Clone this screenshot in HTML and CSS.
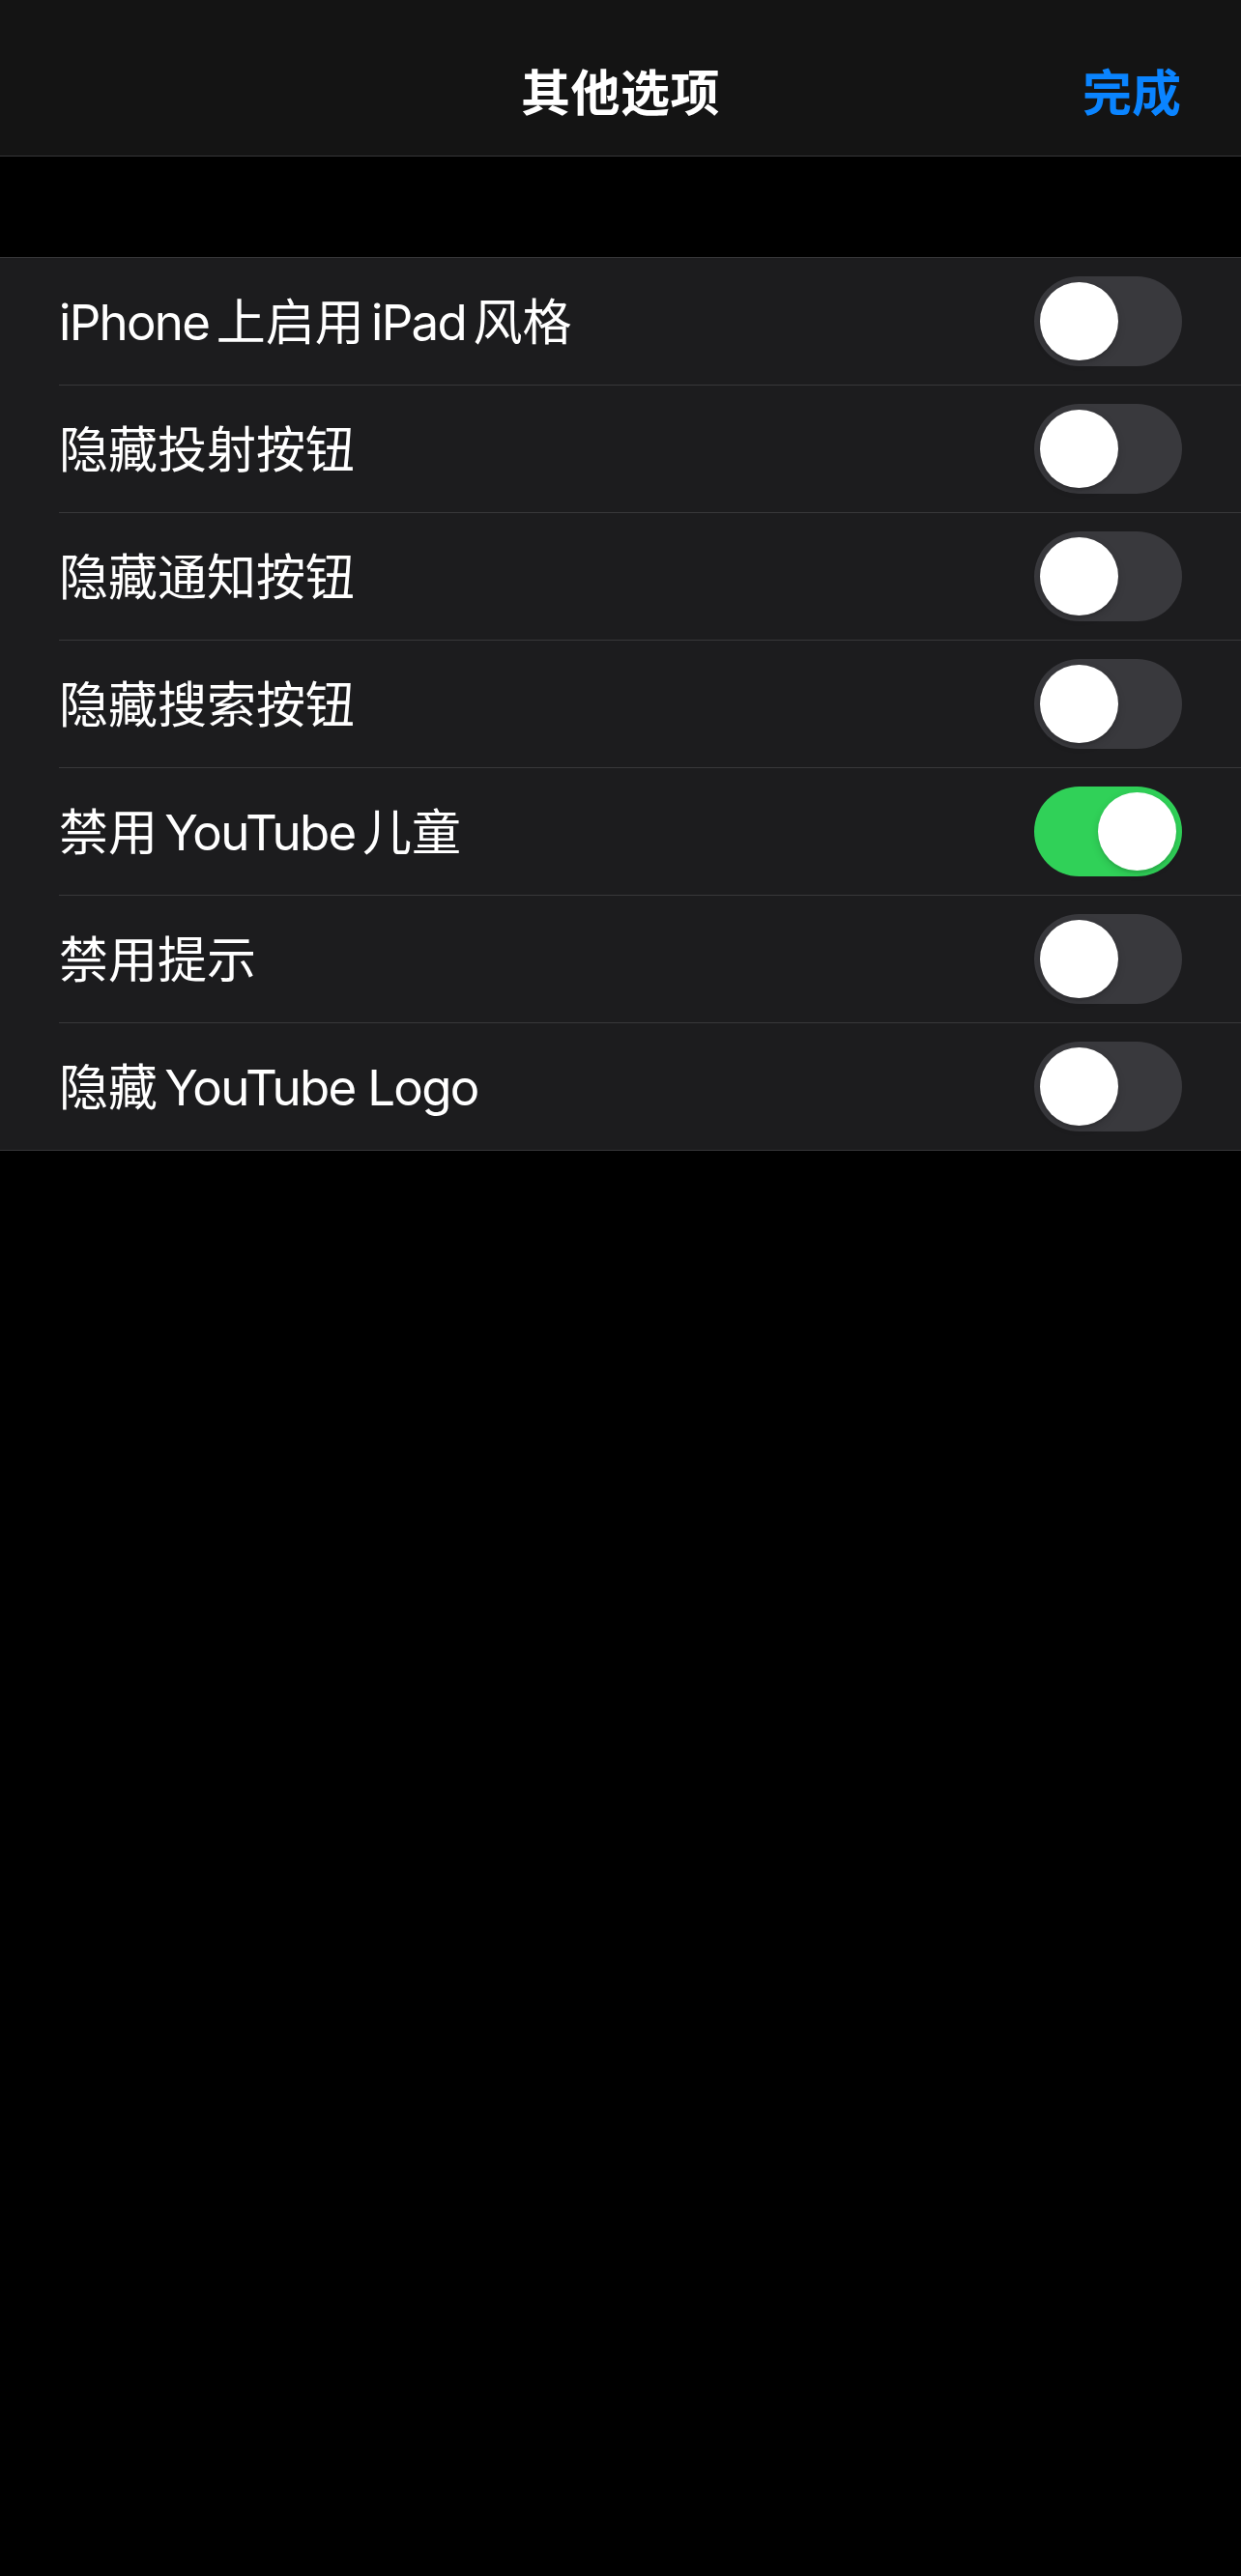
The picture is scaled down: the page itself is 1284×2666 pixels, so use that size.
FILE: index.html
```html
<!DOCTYPE html>
<html lang="zh-CN">
<head>
<meta charset="utf-8">
<title>其他选项</title>
<link rel="stylesheet" href="styles.css">
</head>
<body>
<header class="navbar">
  <div class="nav-side"></div>
  <div class="nav-title">其他选项</div>
  <div class="nav-side nav-right"><span class="nav-done">完成</span></div>
</header>
<div class="gap"></div>
<section class="list">
  <div class="row"><div class="row-inner"><span class="label"><span class="en">iPhone</span> 上启用 <span class="en">iPad</span> 风格</span><span class="switch"><span class="knob"></span></span></div></div>
  <div class="row"><div class="row-inner"><span class="label">隐藏投射按钮</span><span class="switch"><span class="knob"></span></span></div></div>
  <div class="row"><div class="row-inner"><span class="label">隐藏通知按钮</span><span class="switch"><span class="knob"></span></span></div></div>
  <div class="row"><div class="row-inner"><span class="label">隐藏搜索按钮</span><span class="switch"><span class="knob"></span></span></div></div>
  <div class="row"><div class="row-inner"><span class="label">禁用 <span class="en">YouTube</span> 儿童</span><span class="switch on"><span class="knob"></span></span></div></div>
  <div class="row"><div class="row-inner"><span class="label">禁用提示</span><span class="switch"><span class="knob"></span></span></div></div>
  <div class="row"><div class="row-inner"><span class="label">隐藏 <span class="en">YouTube Logo</span></span><span class="switch"><span class="knob"></span></span></div></div>
</section>
</body>
</html>
```
FILE: styles.css
```css
html, body {
  margin: 0;
  padding: 0;
  background: #000;
}
body {
  width: 1284px;
  min-height: 2666px;
  font-family: "Inter", "Noto Sans CJK SC", "Noto Sans", sans-serif;
  color: #fff;
}
.navbar {
  box-sizing: content-box;
  height: 134px;
  padding-top: 27px;
  background: #141414;
  border-bottom: 1px solid #363638;
  display: grid;
  grid-template-columns: 1fr auto 1fr;
  align-items: center;
}
.nav-title {
  font-size: 51px;
  font-weight: 600;
  letter-spacing: 0.5px;
  padding-bottom: 2px;
}
.nav-right {
  display: flex;
  justify-content: flex-end;
  padding-right: 62px;
}
.nav-done {
  color: #0a84ff;
  font-size: 51px;
  font-weight: 600;
  padding-bottom: 2px;
}
.gap {
  height: 104px;
}
.list {
  background: #1c1c1e;
  border-top: 1px solid #363638;
  border-bottom: 1px solid #363638;
}
.row {
  padding-left: 61px;
}
.row-inner {
  height: 131px;
  border-bottom: 1px solid #38383a;
  display: flex;
  align-items: center;
  justify-content: space-between;
  padding-right: 61px;
}
.row:last-child .row-inner {
  border-bottom: none;
}
.label {
  font-size: 51px;
  font-weight: 400;
  word-spacing: -7px;
  padding-bottom: 6px;
}
.en {
  letter-spacing: -1.7px;
  word-spacing: 0;
}
.switch {
  width: 153px;
  height: 93px;
  border-radius: 47px;
  background: #39393d;
  display: flex;
  align-items: center;
  justify-content: flex-start;
  padding: 0 6px;
  box-sizing: border-box;
  flex: none;
}
.switch.on {
  background: #30d158;
  justify-content: flex-end;
}
.knob {
  width: 81px;
  height: 81px;
  border-radius: 50%;
  background: #fff;
  box-shadow: 0 3px 8px rgba(0, 0, 0, 0.15), 0 3px 1px rgba(0, 0, 0, 0.06);
}
```
